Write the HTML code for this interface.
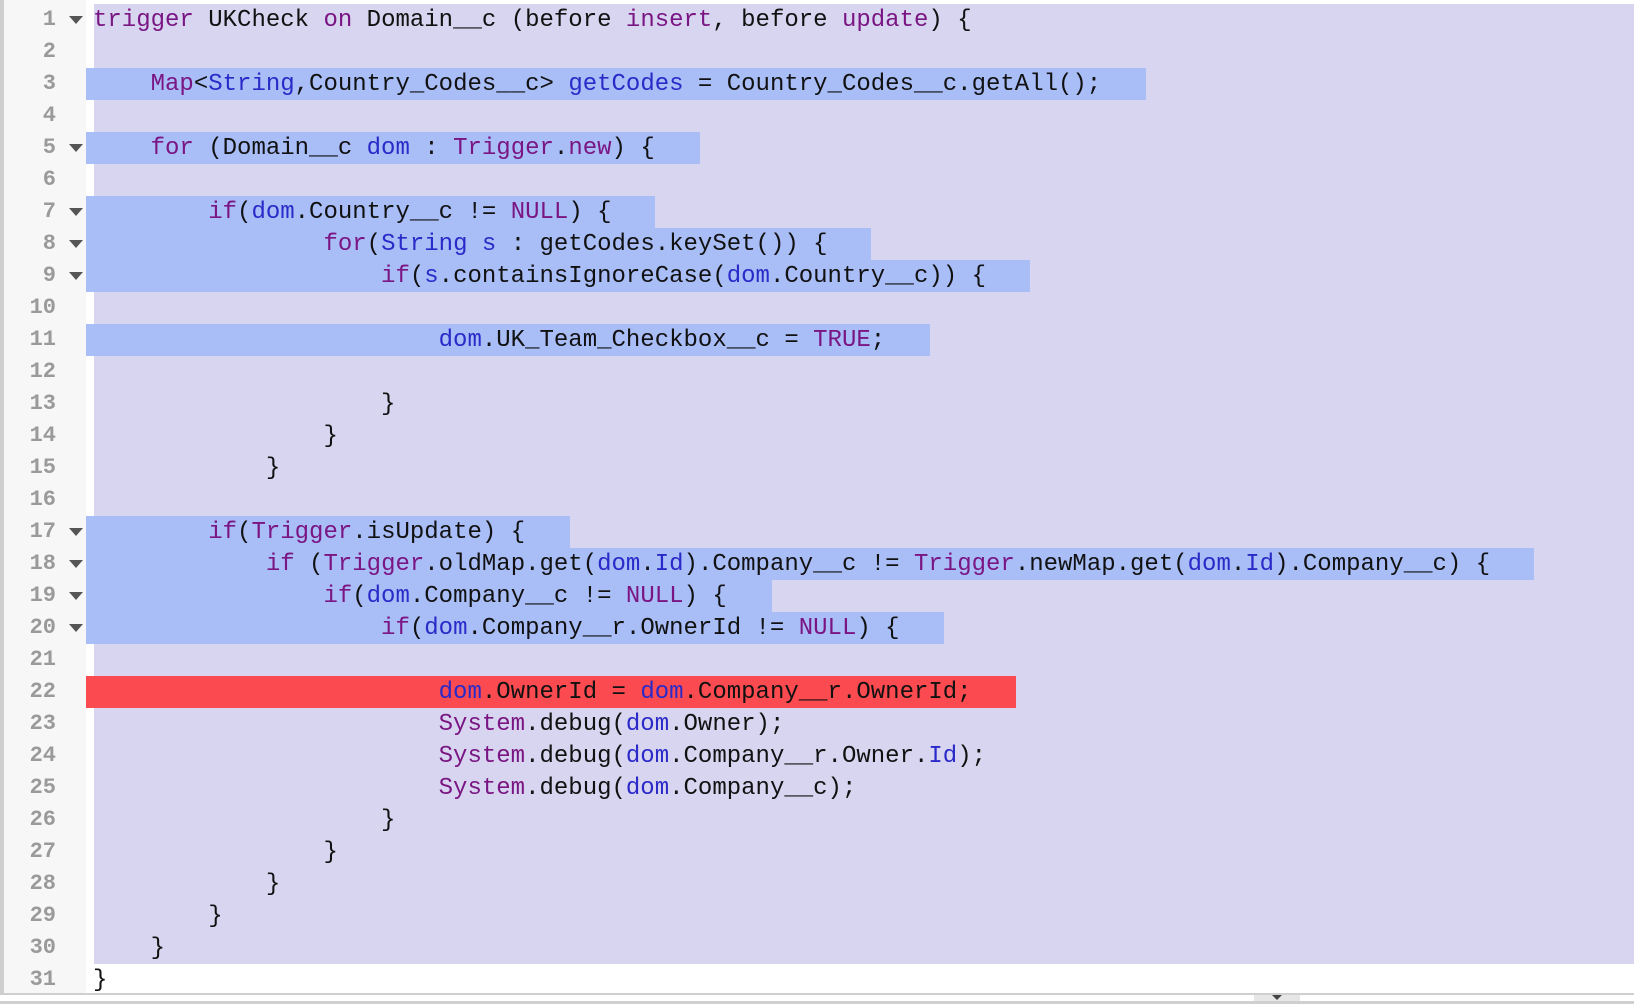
<!DOCTYPE html>
<html><head><meta charset="utf-8"><style>
html,body{margin:0;padding:0;width:1634px;height:1004px;overflow:hidden;background:#fff;}
.gut{position:absolute;left:0;top:0;width:86px;height:994px;background:#f7f7f7;border-left:4px solid #cfcfcf;box-sizing:border-box;}
.band{position:absolute;left:94px;right:0;top:4px;height:960px;background:#d8d5f0;}
.hl{position:absolute;left:86px;height:32px;background:#a9bdf7;}
.red{background:#fb4b50;}
.ln{position:absolute;left:0;width:56px;text-align:right;height:32px;line-height:32px;margin-top:3px;font:22px "Liberation Mono",monospace;color:#9a9a9a;font-weight:bold;}
.ar{position:absolute;left:69px;width:0;height:0;border-left:7px solid transparent;border-right:7px solid transparent;border-top:8px solid #555;}
.code{position:absolute;left:93px;height:32px;line-height:32px;margin-top:3px;font:24px "Liberation Mono",monospace;color:#111;white-space:pre;}
.p{color:#7a1683}.b{color:#2a2ac8}
.bot1{position:absolute;left:0;right:0;top:993px;height:2px;background:#cfcfcf;}
.bot2{position:absolute;left:0;right:0;top:1001px;height:3px;background:#cfcfcf;}
.tab{position:absolute;left:1254px;top:995px;width:46px;height:6px;background:#e6e6e6;}
.tab:after{content:"";position:absolute;left:18px;top:0;border-left:5px solid transparent;border-right:5px solid transparent;border-top:5px solid #444;}
</style></head><body>
<div class="gut"></div>
<div class="band"></div>
<div class="hl" style="top:68px;width:1060px"></div>
<div class="hl" style="top:132px;width:614px"></div>
<div class="hl" style="top:196px;width:569px"></div>
<div class="hl" style="top:228px;width:785px"></div>
<div class="hl" style="top:260px;width:944px"></div>
<div class="hl" style="top:324px;width:844px"></div>
<div class="hl" style="top:516px;width:484px"></div>
<div class="hl" style="top:548px;width:1448px"></div>
<div class="hl" style="top:580px;width:686px"></div>
<div class="hl" style="top:612px;width:858px"></div>
<div class="hl red" style="top:676px;width:930px"></div>
<div class="bot1"></div><div class="bot2"></div><div class="tab"></div>
<div class="ln" style="top:4px">1</div><div class="ln" style="top:36px">2</div><div class="ln" style="top:68px">3</div><div class="ln" style="top:100px">4</div><div class="ln" style="top:132px">5</div><div class="ln" style="top:164px">6</div><div class="ln" style="top:196px">7</div><div class="ln" style="top:228px">8</div><div class="ln" style="top:260px">9</div><div class="ln" style="top:292px">10</div><div class="ln" style="top:324px">11</div><div class="ln" style="top:356px">12</div><div class="ln" style="top:388px">13</div><div class="ln" style="top:420px">14</div><div class="ln" style="top:452px">15</div><div class="ln" style="top:484px">16</div><div class="ln" style="top:516px">17</div><div class="ln" style="top:548px">18</div><div class="ln" style="top:580px">19</div><div class="ln" style="top:612px">20</div><div class="ln" style="top:644px">21</div><div class="ln" style="top:676px">22</div><div class="ln" style="top:708px">23</div><div class="ln" style="top:740px">24</div><div class="ln" style="top:772px">25</div><div class="ln" style="top:804px">26</div><div class="ln" style="top:836px">27</div><div class="ln" style="top:868px">28</div><div class="ln" style="top:900px">29</div><div class="ln" style="top:932px">30</div><div class="ln" style="top:964px">31</div>
<div class="ar" style="top:16px"></div><div class="ar" style="top:144px"></div><div class="ar" style="top:208px"></div><div class="ar" style="top:240px"></div><div class="ar" style="top:272px"></div><div class="ar" style="top:528px"></div><div class="ar" style="top:560px"></div><div class="ar" style="top:592px"></div><div class="ar" style="top:624px"></div>
<div class="code" style="top:4px"><span class="p">trigger</span> UKCheck <span class="p">on</span> Domain__c (before <span class="p">insert</span>, before <span class="p">update</span>) {</div>
<div class="code" style="top:68px">    <span class="p">Map</span>&lt;<span class="b">String</span>,Country_Codes__c&gt; <span class="b">getCodes</span> = Country_Codes__c.getAll();</div>
<div class="code" style="top:132px">    <span class="p">for</span> (Domain__c <span class="b">dom</span> : <span class="p">Trigger</span>.<span class="p">new</span>) {</div>
<div class="code" style="top:196px">        <span class="p">if</span>(<span class="b">dom</span>.Country__c != <span class="p">NULL</span>) {</div>
<div class="code" style="top:228px">                <span class="p">for</span>(<span class="b">String</span> <span class="b">s</span> : getCodes.keySet()) {</div>
<div class="code" style="top:260px">                    <span class="p">if</span>(<span class="b">s</span>.containsIgnoreCase(<span class="b">dom</span>.Country__c)) {</div>
<div class="code" style="top:324px">                        <span class="b">dom</span>.UK_Team_Checkbox__c = <span class="p">TRUE</span>;</div>
<div class="code" style="top:388px">                    }</div>
<div class="code" style="top:420px">                }</div>
<div class="code" style="top:452px">            }</div>
<div class="code" style="top:516px">        <span class="p">if</span>(<span class="p">Trigger</span>.isUpdate) {</div>
<div class="code" style="top:548px">            <span class="p">if</span> (<span class="p">Trigger</span>.oldMap.get(<span class="b">dom</span>.<span class="b">Id</span>).Company__c != <span class="p">Trigger</span>.newMap.get(<span class="b">dom</span>.<span class="b">Id</span>).Company__c) {</div>
<div class="code" style="top:580px">                <span class="p">if</span>(<span class="b">dom</span>.Company__c != <span class="p">NULL</span>) {</div>
<div class="code" style="top:612px">                    <span class="p">if</span>(<span class="b">dom</span>.Company__r.OwnerId != <span class="p">NULL</span>) {</div>
<div class="code" style="top:676px">                        <span class="b">dom</span>.OwnerId = <span class="b">dom</span>.Company__r.OwnerId;</div>
<div class="code" style="top:708px">                        <span class="p">System</span>.debug(<span class="b">dom</span>.Owner);</div>
<div class="code" style="top:740px">                        <span class="p">System</span>.debug(<span class="b">dom</span>.Company__r.Owner.<span class="b">Id</span>);</div>
<div class="code" style="top:772px">                        <span class="p">System</span>.debug(<span class="b">dom</span>.Company__c);</div>
<div class="code" style="top:804px">                    }</div>
<div class="code" style="top:836px">                }</div>
<div class="code" style="top:868px">            }</div>
<div class="code" style="top:900px">        }</div>
<div class="code" style="top:932px">    }</div>
<div class="code" style="top:964px">}</div>
</body></html>
